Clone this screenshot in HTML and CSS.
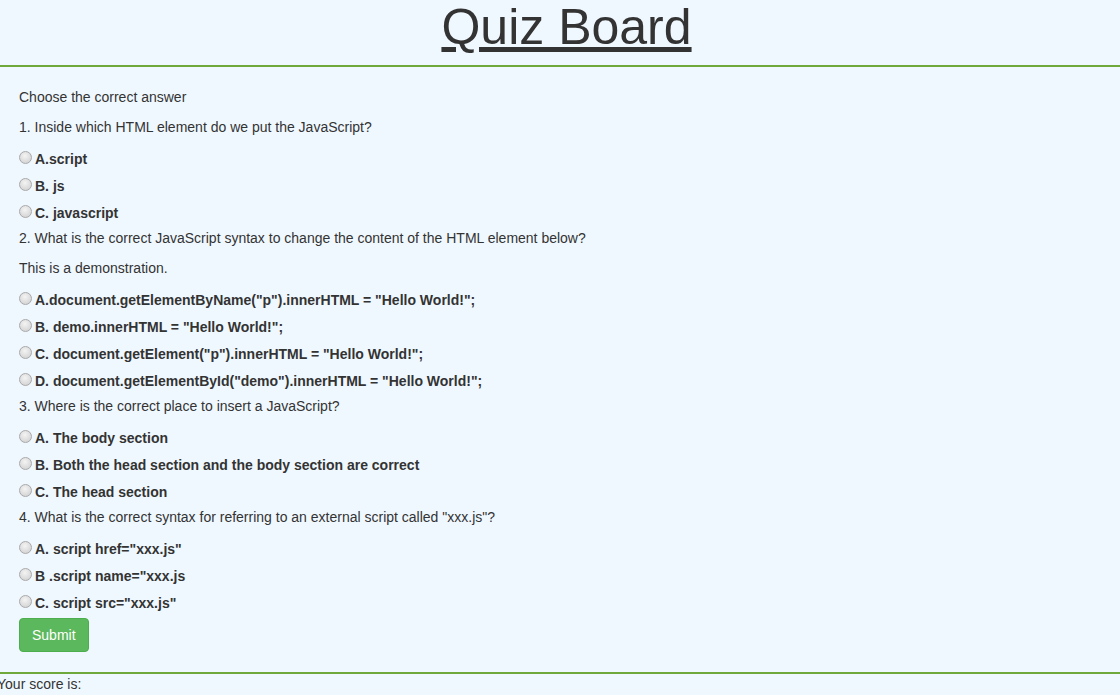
FILE: index.html
```html
<!DOCTYPE html>
<html>
<head>
<meta charset="utf-8">
<title>Quiz Board</title>
<link rel="stylesheet" href="styles.css">
</head>
<body>
<header class="header">
  <h1 class="title"><u>Quiz Board</u></h1>
</header>
<form class="quiz">
  <p class="line">Choose the correct answer</p>
  <p class="line">1. Inside which HTML element do we put the JavaScript?</p>
  <label class="opt"><input type="radio" name="q1"><span>A.script</span></label>
  <label class="opt"><input type="radio" name="q1"><span>B. js</span></label>
  <label class="opt"><input type="radio" name="q1"><span>C. javascript</span></label>
  <p class="line">2. What is the correct JavaScript syntax to change the content of the HTML element below?</p>
  <p class="line">This is a demonstration.</p>
  <label class="opt"><input type="radio" name="q2"><span>A.document.getElementByName("p").innerHTML = "Hello World!";</span></label>
  <label class="opt"><input type="radio" name="q2"><span>B. demo.innerHTML = "Hello World!";</span></label>
  <label class="opt"><input type="radio" name="q2"><span>C. document.getElement("p").innerHTML = "Hello World!";</span></label>
  <label class="opt"><input type="radio" name="q2"><span>D. document.getElementById("demo").innerHTML = "Hello World!";</span></label>
  <p class="line">3. Where is the correct place to insert a JavaScript?</p>
  <label class="opt"><input type="radio" name="q3"><span>A. The body section</span></label>
  <label class="opt"><input type="radio" name="q3"><span>B. Both the head section and the body section are correct</span></label>
  <label class="opt"><input type="radio" name="q3"><span>C. The head section</span></label>
  <p class="line">4. What is the correct syntax for referring to an external script called "xxx.js"?</p>
  <label class="opt"><input type="radio" name="q4"><span>A. script href="xxx.js"</span></label>
  <label class="opt"><input type="radio" name="q4"><span>B .script name="xxx.js</span></label>
  <label class="opt"><input type="radio" name="q4"><span>C. script src="xxx.js"</span></label>
  <button type="button" class="btn-submit">Submit</button>
</form>
<footer class="score">Your score is:</footer>
</body>
</html>
```
FILE: styles.css
```css
html, body {
  margin: 0;
  padding: 0;
}
body {
  background: #f0f8ff;
  color: #333333;
  font-family: "Liberation Sans", Arial, Helvetica, sans-serif;
  font-size: 14px;
  line-height: 20px;
}
.header {
  border-bottom: 2px solid #6fa83b;
  padding-bottom: 10px;
}
.title {
  margin: 0;
  padding-left: 13px;
  font-size: 50px;
  line-height: 55px;
  font-weight: 500;
  text-align: center;
}
.quiz {
  padding: 20px 19px 20px 19px;
  border-bottom: 2px solid #6fa83b;
}
.line {
  margin: 0 0 10px 0;
}
.opt {
  display: flex;
  align-items: center;
  height: 20px;
  padding: 2px 0 5px 0;
  font-weight: bold;
}
.opt input {
  appearance: none;
  -webkit-appearance: none;
  width: 13px;
  height: 13px;
  margin: -3px 3px 0 0;
  border-radius: 50%;
  border: 1px solid #a9a9a9;
  background: radial-gradient(circle at 45% 35%, #f4f4f4 0%, #dcdcdc 60%, #cdcdcd 100%);
  box-sizing: border-box;
  flex: none;
}
.btn-submit {
  display: block;
  font-family: inherit;
  font-size: 14px;
  line-height: 20px;
  padding: 6px 12px;
  color: #ffffff;
  background: #5cb85c;
  border: 1px solid #4cae4c;
  border-radius: 4px;
  cursor: pointer;
}
.score {
  margin: 0;
  text-indent: -3px;
}
```
